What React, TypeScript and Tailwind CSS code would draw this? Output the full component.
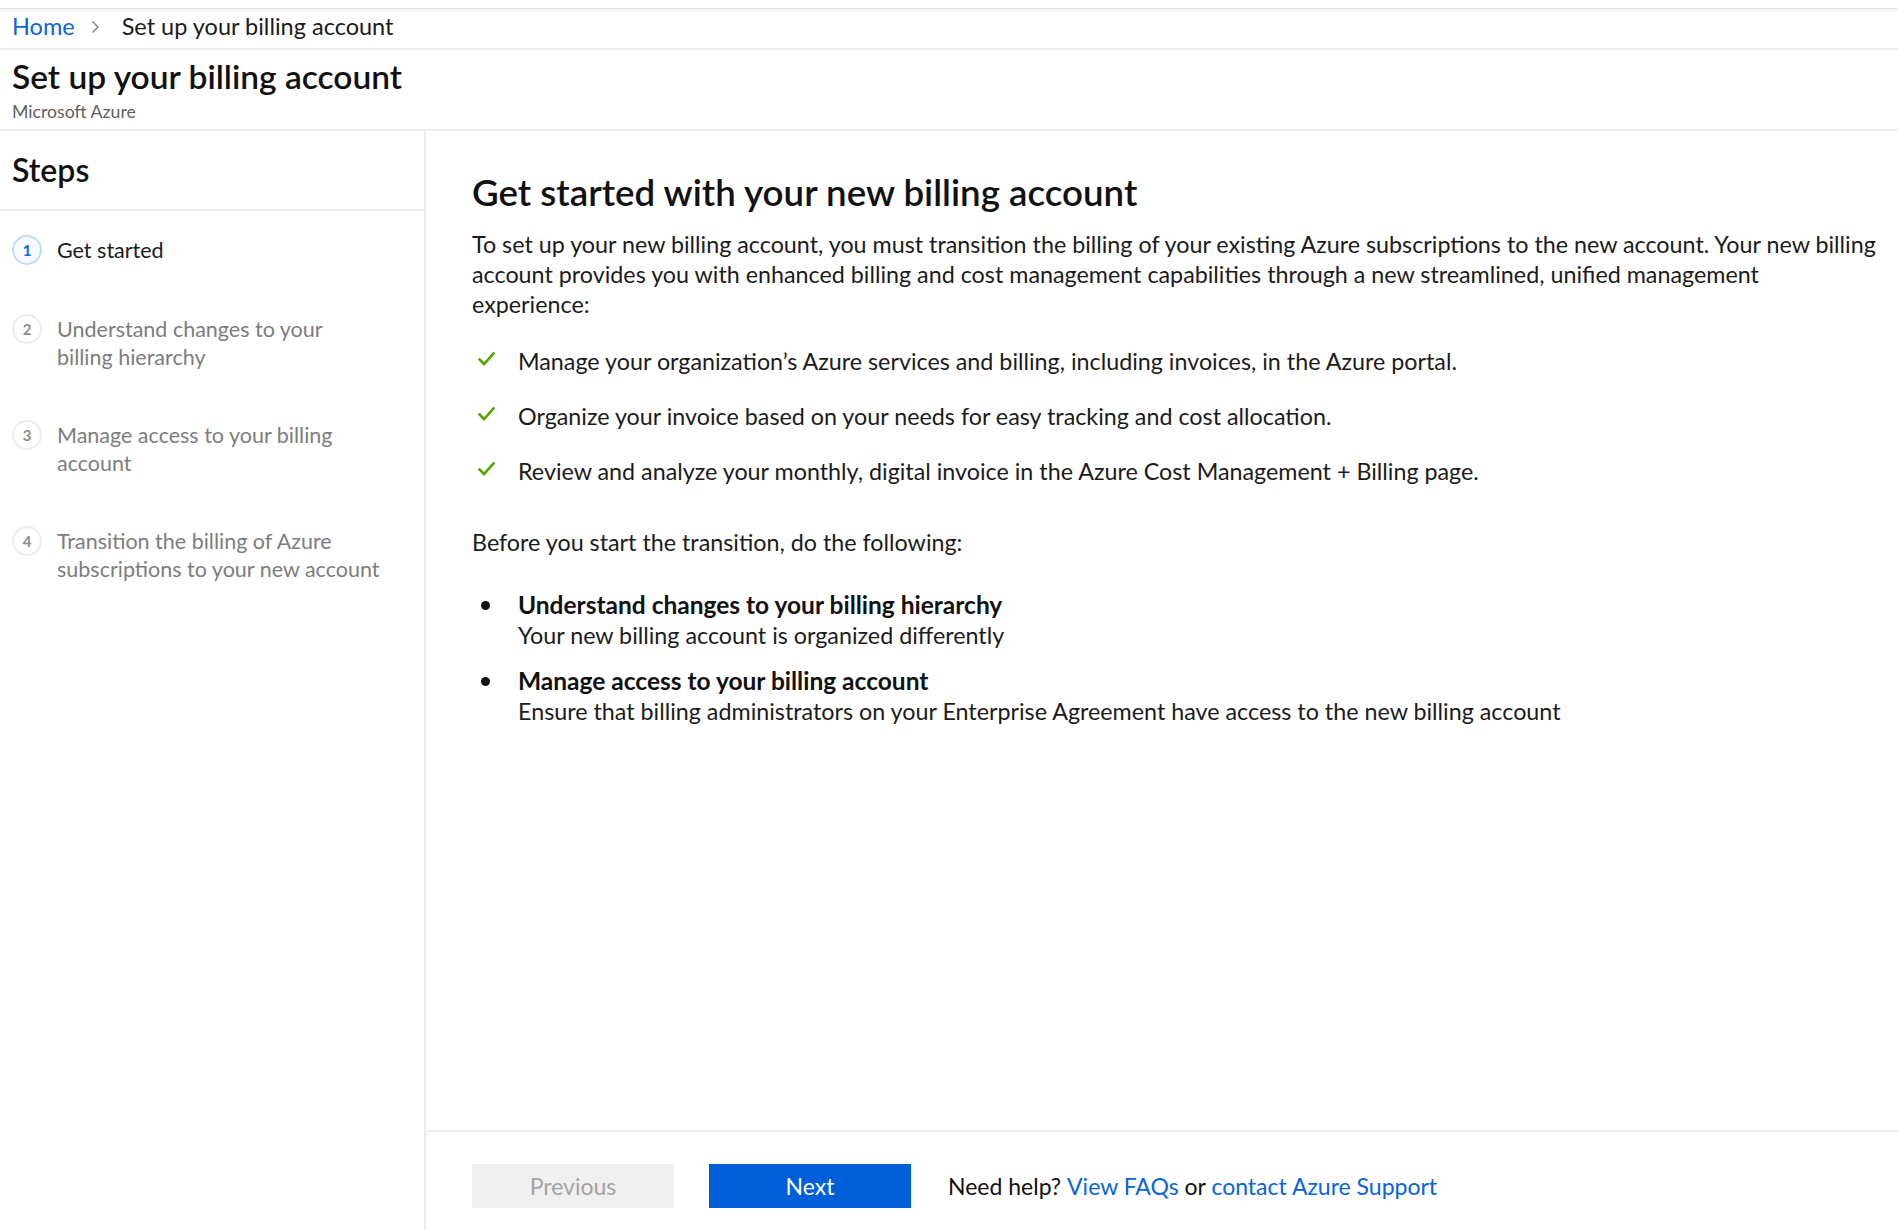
import React from "react";

function Check() {
  return (
    <svg width="17" height="14" viewBox="0 0 17 14" className="block">
      <path d="M1.5 7.5 L6 12 L15.5 1.5" fill="none" stroke="#57a300" strokeWidth="2.6" strokeLinecap="square" />
    </svg>
  );
}

function Step({ n, active, children }: { n: number; active?: boolean; children: React.ReactNode }) {
  return (
    <div className="flex items-start pl-[12px]">
      <div
        className={
          active
            ? "mt-[-1px] w-[30px] h-[30px] shrink-0 rounded-full border-2 border-[#c2dcfb] bg-[#f7fbff] flex items-center justify-center text-[15px] font-bold text-[#1467c9]"
            : "mt-[-1px] w-[30px] h-[30px] shrink-0 rounded-full border-2 border-[#ececec] bg-white flex items-center justify-center text-[15px] font-bold text-[#8c8c8c]"
        }
      >
        {n}
      </div>
      <div className={"ml-[15px] text-[21.5px] leading-[28px] " + (active ? "text-[#1b1b1b]" : "text-[#7d7d7d]")}>{children}</div>
    </div>
  );
}

export default function App() {
  return (
    <div className="h-[1230px] w-[1898px] overflow-hidden bg-white font-['Lato',sans-serif] text-[#1b1b1b] flex flex-col">
      <div className="h-[9px] shrink-0 border-b border-[#e2e2e2] shadow-[0_2px_4px_rgba(0,0,0,0.05)]" />
      <div className="h-[41px] shrink-0 flex items-center pl-[12px] pb-[4px] text-[23.5px] border-b-2 border-[#ececec]">
        <a className="text-[#0a64d9]">Home</a>
        <svg className="ml-[16px] mr-[22px]" width="9" height="14" viewBox="0 0 9 14">
          <path d="M1.5 1.5 L7 7 L1.5 12.5" fill="none" stroke="#7a7a7a" strokeWidth="1.3" />
        </svg>
        <span>Set up your billing account</span>
      </div>
      <div className="h-[81px] shrink-0 pl-[12px] border-b-2 border-[#ececec]">
        <div className="mt-[8px] text-[33.5px] leading-[36px] font-semibold text-[#111]">Set up your billing account</div>
        <div className="mt-[8px] text-[17.7px] leading-[20px] text-[#5f5f5f]">Microsoft Azure</div>
      </div>
      <div className="flex flex-1 min-h-0">
        <div className="w-[426px] shrink-0 border-r-2 border-[#ececec] flex flex-col">
          <div className="h-[80px] shrink-0 flex items-center pl-[12px] border-b-2 border-[#ececec] text-[32px] font-semibold text-[#111]">
            Steps
          </div>
          <div className="pt-[25px] flex flex-col gap-[50px]">
            <Step n={1} active>
              Get started
            </Step>
            <Step n={2}>
              Understand changes to your
              <br />
              billing hierarchy
            </Step>
            <Step n={3}>
              Manage access to your billing
              <br />
              account
            </Step>
            <Step n={4}>
              Transition the billing of Azure
              <br />
              subscriptions to your new account
            </Step>
          </div>
        </div>
        <div className="flex-1 flex flex-col min-w-0">
          <div className="flex-1 pl-[46px] pt-[39px]">
            <h1 className="text-[36.7px] leading-[44px] font-semibold text-[#111]">Get started with your new billing account</h1>
            <p className="mt-[15px] text-[23.3px] leading-[30px]">
              <span className="block whitespace-nowrap">
                To set up your new billing account, you must transition the billing of your existing Azure subscriptions to the new account. Your new billing
              </span>
              <span className="block whitespace-nowrap">
                account provides you with enhanced billing and cost management capabilities through a new streamlined, unified management
              </span>
              <span className="block whitespace-nowrap">experience:</span>
            </p>
            <div className="mt-[27px] flex flex-col gap-[25px] text-[23.3px] leading-[30px]">
              {[
                "Manage your organization\u2019s Azure services and billing, including invoices, in the Azure portal.",
                "Organize your invoice based on your needs for easy tracking and cost allocation.",
                "Review and analyze your monthly, digital invoice in the Azure Cost Management + Billing page.",
              ].map((t) => (
                <div key={t} className="flex items-start">
                  <div className="w-[46px] shrink-0 pl-[6px] pt-[6px]">
                    <Check />
                  </div>
                  <div className="whitespace-nowrap">{t}</div>
                </div>
              ))}
            </div>
            <p className="mt-[41px] text-[23.3px] leading-[30px]">Before you start the transition, do the following:</p>
            <div className="mt-[33px] flex flex-col gap-[16px] text-[23.3px] leading-[30px]">
              {[
                ["Understand changes to your billing hierarchy", "Your new billing account is organized differently"],
                [
                  "Manage access to your billing account",
                  "Ensure that billing administrators on your Enterprise Agreement have access to the new billing account",
                ],
              ].map(([a, b]) => (
                <div key={a} className="flex items-start">
                  <div className="w-[46px] shrink-0 pl-[9px] pt-[11px]">
                    <div className="w-[9px] h-[9px] rounded-full bg-[#111]" />
                  </div>
                  <div className="whitespace-nowrap">
                    <div className="font-bold text-[24.5px] text-[#111]">{a}</div>
                    <div>{b}</div>
                  </div>
                </div>
              ))}
            </div>
          </div>
          <div className="h-[100px] shrink-0 border-t-2 border-[#ececec] pl-[46px] pt-[32px] flex items-start text-[23px]">
            <button className="w-[202px] h-[44px] bg-[#f0f0f0] text-[#a3a3a3]">Previous</button>
            <button className="ml-[35px] w-[202px] h-[44px] bg-[#005ed9] text-white">Next</button>
            <div className="ml-[37px] h-[44px] flex items-center text-[#111]">
              Need help?&nbsp;<a className="text-[#0a64d9]">View FAQs</a>&nbsp;or&nbsp;<a className="text-[#0a64d9]">contact Azure Support</a>
            </div>
          </div>
        </div>
      </div>
    </div>
  );
}
